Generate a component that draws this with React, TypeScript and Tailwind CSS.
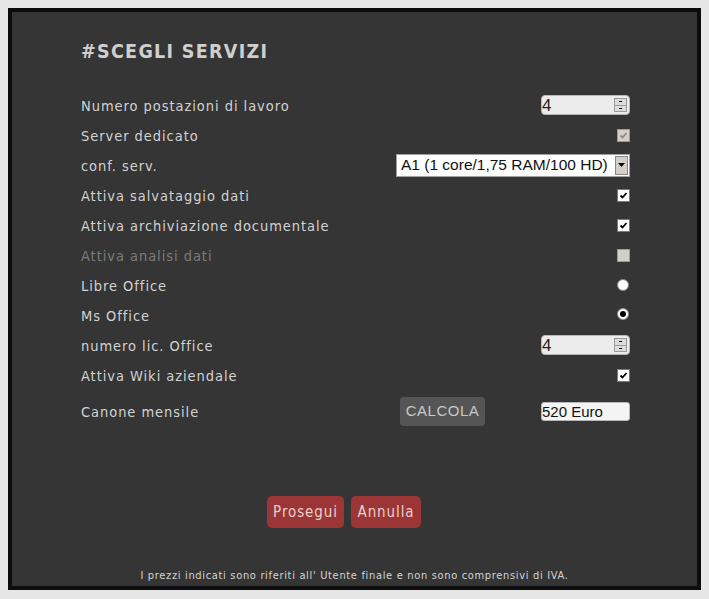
import React from "react";

const F = { fontFamily: '"DejaVu Sans Condensed", "DejaVu Sans", sans-serif' };
const A = { fontFamily: '"Liberation Sans", Arial, sans-serif' };

function Check({ checked = true, disabled = false }: { checked?: boolean; disabled?: boolean }) {
  return (
    <span
      className={`inline-flex h-[13px] w-[13px] items-center justify-center border ${
        disabled ? "border-[#9a9a9a] bg-[#d4d0c8]" : "border-[#7a7a7a] bg-white"
      }`}
    >
      {checked && (
        <svg width="9" height="9" viewBox="0 0 9 9">
          <path
            d="M1.5 4.5 L3.5 6.5 L7.5 2"
            fill="none"
            stroke={disabled ? "#8a8a8a" : "#000"}
            strokeWidth="1.8"
          />
        </svg>
      )}
    </span>
  );
}

function Radio({ checked = false }: { checked?: boolean }) {
  return (
    <span className="flex h-[12px] w-[12px] items-center justify-center rounded-full border border-[#8a8a8a] bg-white">
      {checked && <span className="h-[6px] w-[6px] rounded-full bg-black" />}
    </span>
  );
}

function Spin({ value }: { value: string }) {
  return (
    <div className="flex h-[20px] w-[89px] items-center rounded-[4px] border border-[#b8b8b8] bg-[#ececec] pr-[2px]">
      <span className="flex-1 text-[17px] leading-none text-[#222]" style={A}>
        {value}
      </span>
      <span className="flex h-[14px] w-[13px] flex-col border border-[#9a9a9a] bg-[#dcdcdc]">
        <span className="flex flex-1 items-center justify-center border-b border-[#9a9a9a]">
          <span className="h-[1px] w-[3px] bg-black" />
        </span>
        <span className="flex flex-1 items-center justify-center">
          <span className="h-[1px] w-[3px] bg-black" />
        </span>
      </span>
    </div>
  );
}

function Row({
  label,
  children,
  dim = false,
}: {
  label: string;
  children: React.ReactNode;
  dim?: boolean;
}) {
  return (
    <div className="flex h-[30px] items-center justify-between">
      <span
        className={`mt-[3px] text-[14.5px] tracking-[0.95px] ${dim ? "text-[#7c7c7c]" : "text-[#d2d2d2]"}`}
        style={F}
      >
        {label}
      </span>
      <div className="flex items-center">{children}</div>
    </div>
  );
}

export default function App() {
  return (
    <div className="h-[599px] w-[709px] bg-[#e6e6e6] pt-[8px] pl-[8px] pr-[8px] pb-[9px]">
      <div className="flex h-full flex-col border-4 border-[#0c0c0c] bg-[#353535]">
        <div className="pl-[69px] pr-[67px]">
          <h1
            className="mt-[29px] text-[19.5px] font-bold leading-[22px] tracking-[1.3px] text-[#cfcfcf]"
            style={F}
          >
            #SCEGLI SERVIZI
          </h1>
          <div className="mt-[27px] flex flex-col">
            <Row label="Numero postazioni di lavoro">
              <Spin value="4" />
            </Row>
            <Row label="Server dedicato">
              <Check disabled />
            </Row>
            <Row label="conf. serv.">
              <div className="flex h-[23px] w-[234px] items-center border border-[#a0a0a0] bg-white pl-[4px] pr-[1px]">
                <span className="flex-1 text-[15.5px] leading-none text-[#111]" style={A}>
                  A1 (1 core/1,75 RAM/100 HD)
                </span>
                <span className="flex h-[19px] w-[13px] items-center justify-center border border-[#888] bg-[#d4d0c8]">
                  <svg width="7" height="4" viewBox="0 0 7 4">
                    <path d="M0 0 H7 L3.5 4 Z" fill="#000" />
                  </svg>
                </span>
              </div>
            </Row>
            <Row label="Attiva salvataggio dati">
              <Check />
            </Row>
            <Row label="Attiva archiviazione documentale">
              <Check />
            </Row>
            <Row label="Attiva analisi dati" dim>
              <Check checked={false} disabled />
            </Row>
            <Row label="Libre Office">
              <span className="mr-[1px] mb-[1px]">
                <Radio />
              </span>
            </Row>
            <Row label="Ms Office">
              <span className="mr-[1px] mb-[2px]">
                <Radio checked />
              </span>
            </Row>
            <Row label="numero lic. Office">
              <Spin value="4" />
            </Row>
            <Row label="Attiva Wiki aziendale">
              <Check />
            </Row>
            <div className="mt-[6px] flex h-[30px] items-center">
              <span className="mt-[3px] flex-1 text-[14.5px] tracking-[0.95px] text-[#d2d2d2]" style={F}>
                Canone mensile
              </span>
              <button
                className="flex h-[29px] w-[85px] items-center justify-center rounded-[4px] bg-[#555555] text-[15px] tracking-[0.5px] text-[#c8c8c8]"
                style={A}
              >
                CALCOLA
              </button>
              <div
                className="ml-[56px] flex h-[19px] w-[89px] items-center rounded-[3px] border border-[#b8b8b8] bg-[#f4f4f4] text-[15px] leading-none text-[#111]"
                style={A}
              >
                520 Euro
              </div>
            </div>
          </div>
        </div>
        <div className="mt-[70px] flex gap-[7px] pl-[255px]">
          <button
            className="flex h-[32px] w-[77px] items-center justify-center rounded-[5px] bg-[#9c3535] pt-[1px] text-[15px] tracking-[0.9px] text-[#e6d0d0]"
            style={F}
          >
            Prosegui
          </button>
          <button
            className="flex h-[32px] w-[70px] items-center justify-center rounded-[5px] bg-[#9c3535] pt-[1px] text-[15px] tracking-[0.9px] text-[#e6d0d0]"
            style={F}
          >
            Annulla
          </button>
        </div>
        <div className="mt-auto pb-[1px] text-center">
          <span className="inline-block text-[11px] tracking-[0.67px] text-[#d4d4d4]" style={F}>
            I prezzi indicati sono riferiti all' Utente finale e non sono comprensivi di IVA.
          </span>
        </div>
      </div>
    </div>
  );
}
